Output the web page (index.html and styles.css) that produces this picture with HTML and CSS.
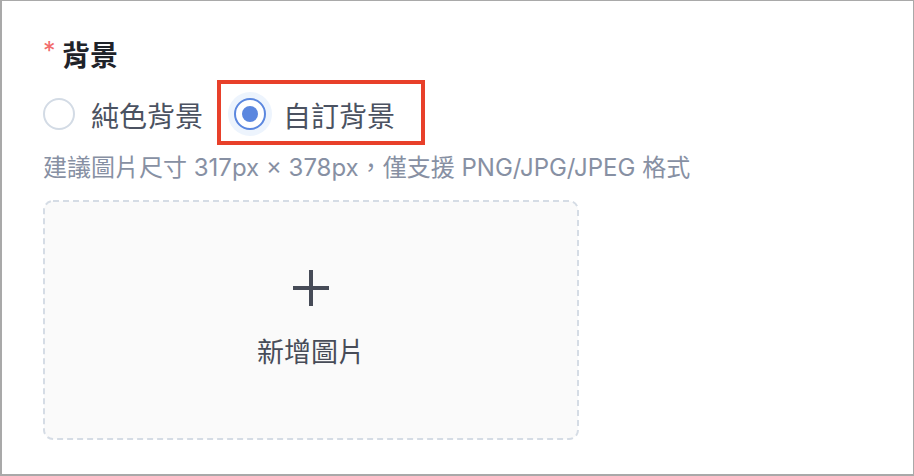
FILE: index.html
```html
<!DOCTYPE html>
<html lang="zh-Hant">
<head>
<meta charset="utf-8">
<title>背景</title>
<link rel="stylesheet" href="styles.css">
</head>
<body>
<div class="frame">
  <div class="field-label"><span class="required">*</span><span class="label-text">背景</span></div>
  <div class="radio-group">
    <label class="radio-item">
      <span class="radio"></span>
      <span class="radio-text">純色背景</span>
    </label>
    <label class="radio-item checked">
      <span class="radio"><span class="dot"></span></span>
      <span class="radio-text">自訂背景</span>
    </label>
  </div>
  <div class="hint">建議圖片尺寸 317px × 378px，僅支援 PNG/JPG/JPEG 格式</div>
  <div class="upload">
    <svg class="dash" width="536" height="240" viewBox="0 0 536 240" aria-hidden="true">
      <rect x="1" y="1" width="534" height="238" rx="9" ry="9" fill="#fafafa" stroke="#d5dce5" stroke-width="2" stroke-dasharray="6 4"/>
    </svg>
    <svg class="plus" width="38" height="38" viewBox="0 0 38 38" aria-hidden="true">
      <path d="M19 1v36M1 19h36" stroke="#464b57" stroke-width="4" fill="none"/>
    </svg>
    <div class="upload-text">新增圖片</div>
  </div>
  <div class="highlight"></div>
</div>
</body>
</html>
```

FILE: styles.css
```css
html, body {
  margin: 0;
  padding: 0;
  background: #fff;
}

.frame {
  position: relative;
  box-sizing: border-box;
  width: 914px;
  height: 476px;
  border-style: solid;
  border-color: #a9a9a9;
  border-width: 1px 1px 2px 2px;
  padding: 33px 0 0 41px;
  background: #fff;
  font-family: "Inter", "Noto Sans CJK TC", sans-serif;
}

.field-label {
  display: flex;
  align-items: center;
  height: 40px;
}

.required {
  color: #f26b6b;
  font-size: 25px;
  line-height: 25px;
  margin-top: -6px;
  width: 19px;
}

.label-text {
  font-family: "Noto Sans CJK TC", sans-serif;
  font-size: 28px;
  line-height: 40px;
  font-weight: 700;
  color: #1f2329;
}

.radio-group {
  display: flex;
  align-items: center;
  height: 44px;
  margin-top: 19px;
}

.radio-item {
  display: flex;
  align-items: center;
  margin-right: 31px;
}

.radio {
  box-sizing: border-box;
  width: 32px;
  height: 32px;
  border-radius: 50%;
  border: 2px solid #d3dbe5;
  background: #fff;
  display: flex;
  align-items: center;
  justify-content: center;
  margin-top: -2px;
}

.radio-item.checked .radio {
  border-color: #5b87df;
  box-shadow: 0 0 0 6px #edf4fd;
}

.dot {
  width: 16px;
  height: 16px;
  border-radius: 50%;
  background: #5b87df;
}

.radio-text {
  margin-left: 16px;
  font-family: "Noto Sans CJK TC", sans-serif;
  font-size: 28px;
  line-height: 40px;
  color: #4b5261;
}

.radio-item.checked .radio-text {
  margin-left: 17px;
}

.hint {
  margin-top: 14px;
  font-size: 24px;
  line-height: 34px;
  color: #8790a3;
}

.upload {
  position: relative;
  box-sizing: border-box;
  margin-top: 15px;
  width: 536px;
  height: 240px;
  display: flex;
  flex-direction: column;
  align-items: center;
  justify-content: center;
  gap: 24px;
}

.dash {
  position: absolute;
  left: 0;
  top: 0;
}

.plus {
  position: relative;
  display: block;
}

.upload-text {
  position: relative;
  font-family: "Noto Sans CJK TC", sans-serif;
  font-size: 27px;
  line-height: 40px;
  color: #474c58;
}

.highlight {
  position: absolute;
  left: 215px;
  top: 79px;
  width: 208px;
  height: 65px;
  box-sizing: border-box;
  border: 4px solid #e8402a;
}
```
